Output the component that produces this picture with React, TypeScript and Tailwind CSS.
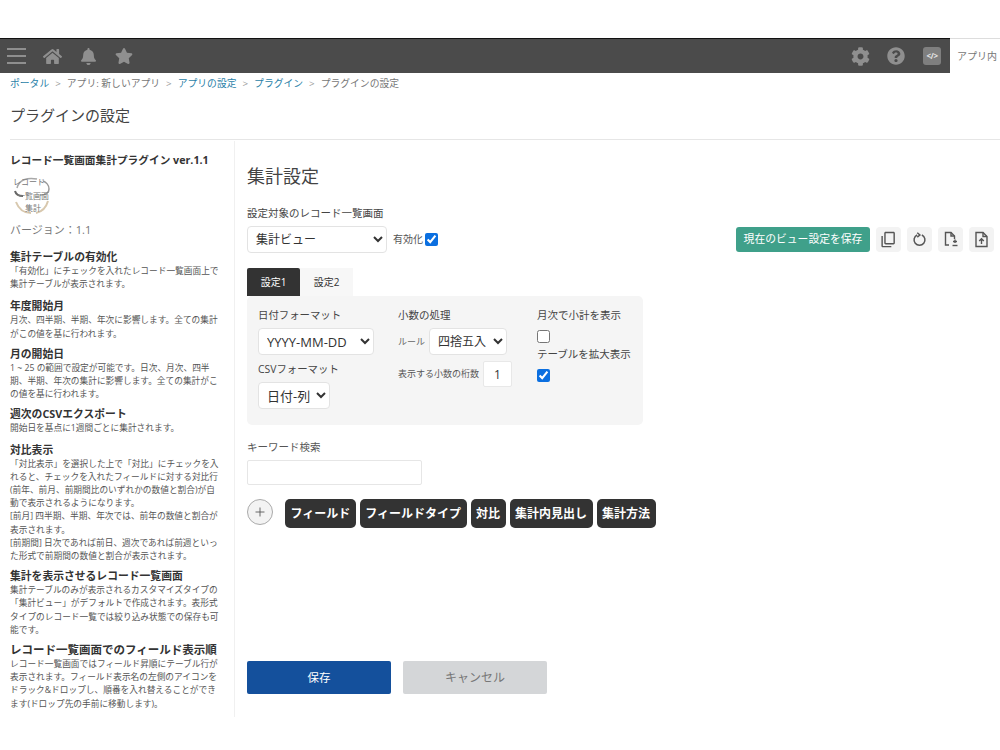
import { FaBell, FaCog, FaHome, FaQuestionCircle, FaStar } from 'react-icons/fa'
import { MdOutlineContentCopy } from 'react-icons/md'
import { Plus } from 'lucide-react'

const FONT = "font-['Open_Sans','Noto_Sans_CJK_JP',sans-serif]"

const HELP: { title: string; big?: boolean; lines: string[] }[] = [
  { title: '集計テーブルの有効化', lines: ['「有効化」にチェックを入れたレコード一覧画面上で', '集計テーブルが表示されます。'] },
  { title: '年度開始月', lines: ['月次、四半期、半期、年次に影響します。全ての集計', 'がこの値を基に行われます。'] },
  { title: '月の開始日', lines: ['1 ~ 25 の範囲で設定が可能です。日次、月次、四半', '期、半期、年次の集計に影響します。全ての集計がこ', 'の値を基に行われます。'] },
  { title: '週次のCSVエクスポート', lines: ['開始日を基点に1週間ごとに集計されます。'] },
  {
    title: '対比表示',
    lines: [
      '「対比表示」を選択した上で「対比」にチェックを入',
      'れると、チェックを入れたフィールドに対する対比行',
      '(前年、前月、前期間比のいずれかの数値と割合)が自',
      '動で表示されるようになります。',
      '[前月] 四半期、半期、年次では、前年の数値と割合が',
      '表示されます。',
      '[前期間] 日次であれば前日、週次であれば前週といっ',
      'た形式で前期間の数値と割合が表示されます。',
    ],
  },
  {
    title: '集計を表示させるレコード一覧画面',
    lines: ['集計テーブルのみが表示されるカスタマイズタイプの', '「集計ビュー」がデフォルトで作成されます。表形式', 'タイプのレコード一覧では絞り込み状態での保存も可', '能です。'],
  },
  {
    title: 'レコード一覧画面でのフィールド表示順',
    big: true,
    lines: ['レコード一覧画面ではフィールド昇順にテーブル行が', '表示されます。フィールド表示名の左側のアイコンを', 'ドラック&ドロップし、順番を入れ替えることができ', 'ます(ドロップ先の手前に移動します)。'],
  },
]

const COLUMNS = ['フィールド', 'フィールドタイプ', '対比', '集計内見出し', '集計方法']

const selectClass = 'bg-white border border-[#e3e3e3] rounded text-[#333] outline-none'

function PluginLogo() {
  return (
    <div className="relative mt-[8px] ml-[3px] w-[38px] h-[40px]">
      <svg viewBox="0 0 38 40" className="absolute inset-0 w-full h-full" fill="none">
        <path d="M4 13 C6 5 14 2 24 4" stroke="#a8a8a8" strokeWidth="1.5" />
        <path d="M2 16 C3 20 6 21 10 21" stroke="#666" strokeWidth="2" />
        <path d="M27 20 C33 20 36 18 36 14 C36 10 33 7 30 6" stroke="#999" strokeWidth="1.5" />
        <path d="M3 27 C6 35 12 38 18 38" stroke="#d8c8ae" strokeWidth="2" />
        <path d="M35 26 C33 33 28 37 23 38" stroke="#d8c8ae" strokeWidth="2" />
      </svg>
      <div className="relative flex flex-col items-center text-[8px] leading-[12px] text-[#777] whitespace-nowrap pt-px">
        <span className="ml-[-6px]">レコード</span>
        <span className="mt-[2px] ml-[2px]">一覧画面</span>
        <span className="ml-[2px]">集計</span>
      </div>
    </div>
  )
}

function Sidebar() {
  return (
    <aside className="w-[235px] shrink-0 border-r border-[#f0f0f0] pl-[10px] pr-[12px] pt-[12px] h-[576px]">
      <h2 className="text-[10.7px] leading-[14px] font-bold text-[#333] whitespace-nowrap">レコード一覧画面集計プラグイン ver.1.1</h2>
      <PluginLogo />
      <p className="mt-[8px] text-[11px] leading-[14px] text-[#777]">バージョン：1.1</p>
      <div className="mt-[13px] flex flex-col gap-[6px]">
        {HELP.map(section => (
          <section key={section.title} className="first:mb-[2px] [&:nth-child(4)]:mb-[1px]">
            <h3 className={`${section.big ? 'text-[11.5px]' : 'text-[10.8px]'} leading-[14px] pb-px font-bold text-[#333] whitespace-nowrap`}>{section.title}</h3>
            {section.lines.map(line => (
              <p key={line} className="text-[8.7px] leading-[13.2px] text-[#555] whitespace-nowrap">{line}</p>
            ))}
          </section>
        ))}
      </div>
    </aside>
  )
}

function IconButton({ children }: { children: React.ReactNode }) {
  return (
    <button className="w-[25px] h-[25px] rounded bg-[#f3f3f3] flex items-center justify-center text-[#555]">{children}</button>
  )
}

function ResetIcon() {
  return (
    <svg width="15" height="15" viewBox="0 0 16 16" fill="none" stroke="currentColor" strokeWidth="1.6">
      <path d="M5.5 3.2 A5.8 5.8 0 1 0 10.5 3.2" />
      <path d="M5.6 0.8 L8.4 3.2 L5.6 5.4" />
    </svg>
  )
}

function FileExportIcon() {
  return (
    <svg width="16" height="17" viewBox="0 0 16 17" fill="none" stroke="currentColor" strokeWidth="1.4">
      <path d="M6 14 H2.5 V1.5 H8 L11.5 5 V8" />
      <path d="M8 1.5 V5 H11.5" />
      <path d="M12 8.5 V12 M10 10.5 H14" />
      <path d="M9.5 14.5 H14.5" />
    </svg>
  )
}

function FileImportIcon() {
  return (
    <svg width="15" height="17" viewBox="0 0 15 17" fill="none" stroke="currentColor" strokeWidth="1.4">
      <path d="M2 1.5 H9 L13 5.5 V15.5 H2 Z" />
      <path d="M9 1.5 V5.5 H13" />
      <path d="M7.5 13 V8 M5.2 10 L7.5 7.8 L9.8 10" />
    </svg>
  )
}

export default function App() {
  return (
    <div className={`${FONT} w-[1000px] h-[750px] overflow-hidden bg-white`}>
      <div className="h-[38px]" />
      <header className="h-[35px] flex items-stretch">
        <div className="flex-1 bg-[#4b4b4b] border-t border-[#111] flex items-center pl-[7px] text-[#8f8f8f]">
          <div className="w-[19px] flex flex-col gap-[5px]">
            <div className="h-[2px] bg-[#8f8f8f]" />
            <div className="h-[2px] bg-[#8f8f8f]" />
            <div className="h-[2px] bg-[#8f8f8f]" />
          </div>
          <FaHome size={19} className="ml-[17px]" />
          <FaBell size={17} className="ml-[18px]" />
          <FaStar size={18} className="ml-[18px]" />
          <div className="flex-1" />
          <FaCog size={19} />
          <FaQuestionCircle size={18} className="ml-[17px]" />
          <div className="ml-[18px] mr-[9px] w-[18px] h-[18px] rounded-[3px] bg-[#7f7f7f] flex items-center justify-center text-[8px] font-bold tracking-[-0.5px] text-[#e4e4e4]">
            &lt;/&gt;
          </div>
        </div>
        <div className="w-[50px] overflow-hidden pl-[7px] text-[10px] leading-[35px] text-[#777] whitespace-nowrap border-t border-[#ddd]">アプリ内</div>
      </header>

      <nav className="h-[22px] pl-[10px] flex items-center text-[9.8px] text-[#777] whitespace-pre">
        <a className="text-[#2a7fa8]">ポータル</a>
        <span className="mx-[6px] text-[#999]">&gt;</span>
        <span>アプリ: 新しいアプリ</span>
        <span className="mx-[6px] text-[#999]">&gt;</span>
        <a className="text-[#2a7fa8]">アプリの設定</a>
        <span className="mx-[6px] text-[#999]">&gt;</span>
        <a className="text-[#2a7fa8]">プラグイン</a>
        <span className="mx-[6px] text-[#999]">&gt;</span>
        <span>プラグインの設定</span>
      </nav>

      <div className="h-[45px] ml-[10px] border-b border-[#e6e6e6] pt-[9px] text-[15px] leading-[22px] text-[#444]">プラグインの設定</div>

      <div className="flex mt-[1px]">
        <Sidebar />
        <main className="flex-1 pl-[12px] pr-[6px] pt-[21px]">
          <h1 className="text-[18px] leading-[28px] text-[#444]">集計設定</h1>
          <label className="block mt-[16px] text-[10.5px] leading-[14px] text-[#444]">設定対象のレコード一覧画面</label>
          <div className="mt-[6px] flex items-center">
            <select className={`${selectClass} w-[140px] h-[27px] pl-[4px] text-[12px]`} defaultValue="a">
              <option value="a">集計ビュー</option>
            </select>
            <span className="ml-[6px] text-[10px] text-[#555]">有効化</span>
            <input type="checkbox" defaultChecked className="ml-[2px] w-[13px] h-[13px] accent-[#0b6fe0]" />
            <div className="flex-1" />
            <button className="w-[134px] h-[25px] rounded-[3px] bg-[#3fa08a] text-white text-[10.8px]">現在のビュー設定を保存</button>
            <div className="ml-[6px] flex gap-[6px]">
              <IconButton><MdOutlineContentCopy size={17} className="-scale-y-100" /></IconButton>
              <IconButton><ResetIcon /></IconButton>
              <IconButton><FileExportIcon /></IconButton>
              <IconButton><FileImportIcon /></IconButton>
            </div>
          </div>

          <div className="mt-[15px] flex text-[10px]">
            <div className="w-[53px] h-[28px] bg-[#333] text-white flex items-center justify-center rounded-t-[2px]">設定1</div>
            <div className="w-[53px] h-[28px] bg-[#f7f7f7] text-[#333] flex items-center justify-center">設定2</div>
          </div>
          <div className="w-[396px] h-[129px] bg-[#f5f5f5] rounded-[5px] pl-[11px] pt-[12px] flex text-[#444]">
            <div className="w-[140px]">
              <label className="block text-[10.4px] leading-[14px]">日付フォーマット</label>
              <select className={`${selectClass} mt-[6px] w-[116px] h-[27px] pl-[4px] text-[13px]`} defaultValue="a">
                <option value="a">YYYY-MM-DD</option>
              </select>
              <label className="block mt-[7px] text-[10.4px] leading-[14px]">CSVフォーマット</label>
              <select className={`${selectClass} mt-[6px] w-[72px] h-[27px] pl-[4px] text-[13px]`} defaultValue="a">
                <option value="a">日付-列</option>
              </select>
            </div>
            <div className="w-[139px]">
              <label className="block text-[10.5px] leading-[14px]">小数の処理</label>
              <div className="mt-[6px] flex items-center">
                <span className="w-[31px] text-[9px] text-[#666]">ルール</span>
                <select className={`${selectClass} w-[78px] h-[27px] pl-[4px] text-[12px]`} defaultValue="a">
                  <option value="a">四捨五入</option>
                </select>
              </div>
              <div className="mt-[6px] flex items-center">
                <span className="w-[85px] text-[9px] text-[#555] whitespace-nowrap">表示する小数の桁数</span>
                <input readOnly value="1" className="w-[29px] h-[26px] bg-white border border-[#e8e8e8] rounded-[2px] text-center text-[12px] text-[#333] outline-none" />
              </div>
            </div>
            <div>
              <label className="block text-[10.5px] leading-[14px]">月次で小計を表示</label>
              <input type="checkbox" className="block mt-[8px] w-[13px] h-[13px]" />
              <label className="block mt-[4px] text-[10.5px] leading-[14px]">テーブルを拡大表示</label>
              <input type="checkbox" defaultChecked className="block mt-[8px] w-[13px] h-[13px] accent-[#0b6fe0]" />
            </div>
          </div>

          <label className="block mt-[15px] text-[10.5px] leading-[14px] text-[#555]">キーワード検索</label>
          <input className="block mt-[6px] w-[175px] h-[25px] border border-[#e6e6e6] rounded-[2px] outline-none" />

          <div className="mt-[14px] flex items-start">
            <button className="w-[26px] h-[26px] rounded-full border border-[#aaa] bg-[#f3f3f3] flex items-center justify-center text-[#555]">
              <Plus size={14} strokeWidth={1.5} />
            </button>
            <div className="ml-[12px] flex gap-[4px]">
              {COLUMNS.map(col => (
                <div key={col} className="h-[29px] px-[5.5px] rounded-[5px] bg-[#333] text-white text-[12px] font-bold flex items-center whitespace-nowrap">{col}</div>
              ))}
            </div>
          </div>

          <div className="mt-[133px] flex gap-[12px]">
            <button className="w-[144px] h-[33px] rounded-[2px] bg-[#14509c] text-white text-[11.5px]">保存</button>
            <button className="w-[144px] h-[33px] rounded-[2px] bg-[#d4d6d8] text-[#777] text-[12px]">キャンセル</button>
          </div>
        </main>
      </div>
    </div>
  )
}
